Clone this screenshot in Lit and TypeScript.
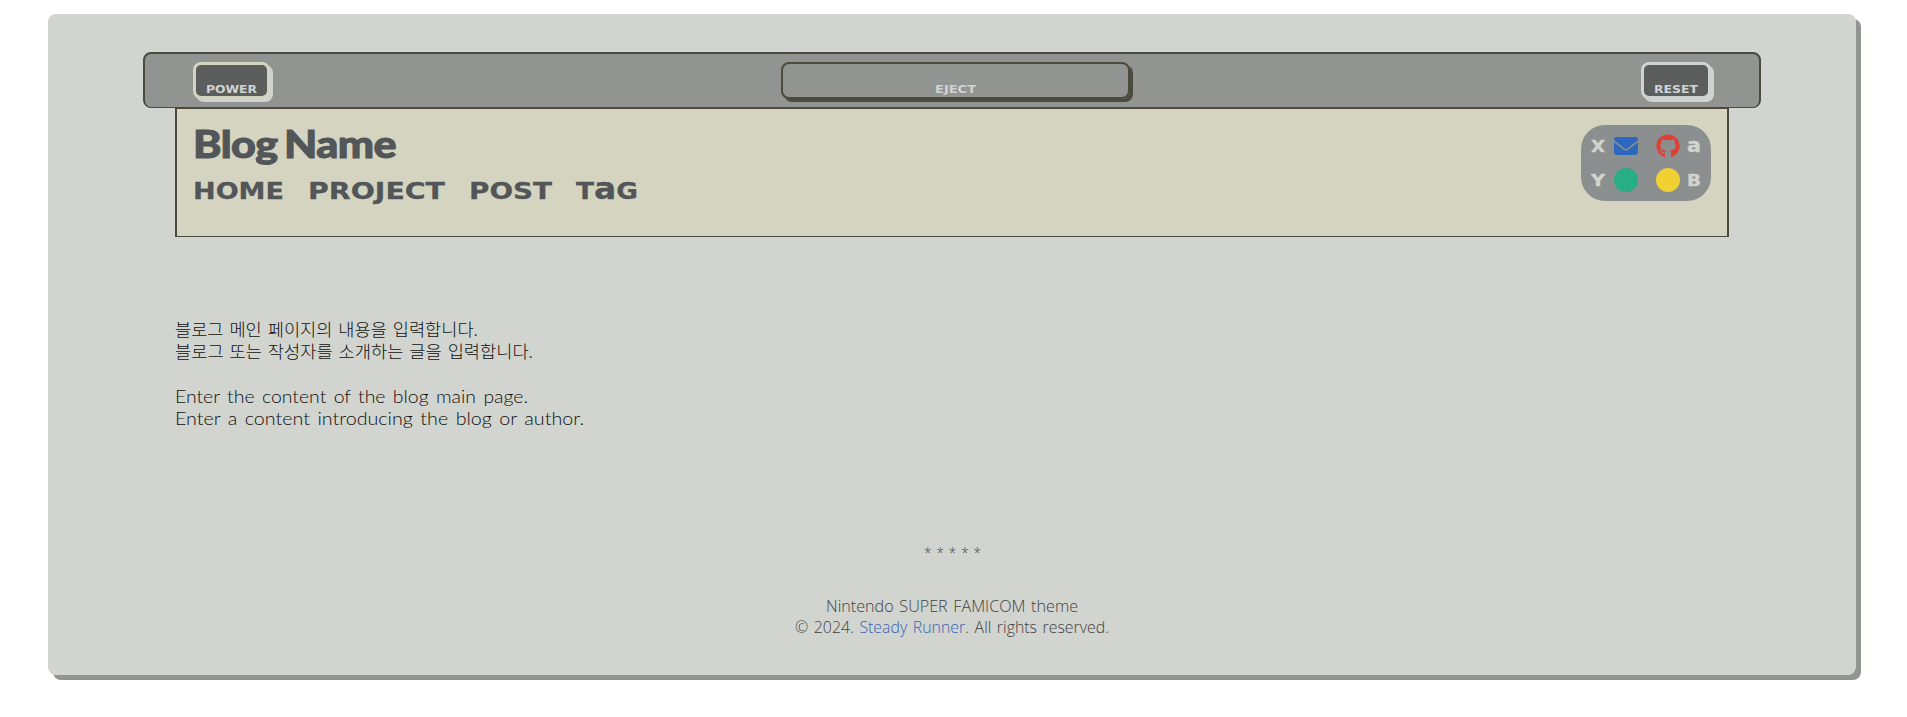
import { LitElement, html, css } from "lit";
import { customElement, property } from "lit/decorators.js";

// One line of text stretched horizontally to a given width.
@customElement("fit-text")
class FitText extends LitElement {
  @property({ type: Number }) w = 100;

  static styles = css`
    :host { display: block; white-space: nowrap; flex: none; }
    .line { display: inline-block; transform-origin: 0 50%; white-space: pre; }
  `;

  firstUpdated() {
    const line = this.renderRoot.querySelector(".line") as HTMLElement;
    this.style.width = `${this.w}px`;
    const natural = line.getBoundingClientRect().width;
    if (natural) line.style.transform = `scaleX(${this.w / natural})`;
  }

  render() {
    return html`<span class="line"><slot></slot></span>`;
  }
}

@customElement("app-root")
class AppRoot extends LitElement {
  static styles = css`
    :host { display: block; height: 717px; background: #fff; overflow: hidden; }
    * { box-sizing: border-box; }
    .page {
      width: 1808px; height: 661px; margin: 14px 0 0 48px; padding: 38px 95px 0;
      background: #d2d4cf; border-radius: 8px; box-shadow: 5px 5px 0 #929492;
      display: flex; flex-direction: column; align-items: center;
    }
    .bar {
      width: 1618px; height: 56px; padding: 8px 48px 0; flex: none;
      background: #929492; border: 2px solid #4c4a3f; border-bottom-width: 1px; border-radius: 8px;
      display: flex; justify-content: space-between; align-items: flex-start;
    }
    .key {
      height: 37px; border-radius: 8px; display: flex; justify-content: center; align-items: flex-end;
      font: bold 10px/12px "DejaVu Sans", sans-serif; color: #d0d3d4;
    }
    .power { width: 77px; background: #5c5e5d; border: 3px solid #d5d4c0; box-shadow: 3px 3px 0 #d0d3d4; }
    .eject { width: 349px; border: 2px solid #4c4a3f; box-shadow: 3px 3px 0 #4c4a3f; padding-bottom: 1px; }
    .reset { width: 70px; background: #5c5e5d; border: 3px solid #d0d3d4; box-shadow: 3px 3px 0 #d0d3d4; }
    header {
      width: 1554px; height: 130px; margin-top: -1px; padding: 16px; flex: none;
      background: #d5d4c0; border: 2px solid #4c4a3f; border-bottom-width: 1px;
      display: flex; justify-content: space-between; align-items: flex-start; color: #525658;
    }
    .title { font: 900 38.5px/40px Lato, sans-serif; margin-top: -2px; word-spacing: -3px; letter-spacing: -0.5px; -webkit-text-stroke: 1px #525658; }
    nav { display: flex; gap: 24px; margin-top: 14px; font: bold 23.5px/28px "DejaVu Sans", sans-serif; -webkit-text-stroke: 0.3px #525658; }
    .tall { font-size: 1.25em; line-height: 0; }
    .pad {
      width: 130px; height: 76px; border-radius: 24px; background: #8c8f8f; padding: 9px 10px 9px;
      display: grid; grid-template-columns: 23px 24px 18px 24px 1fr; grid-template-rows: 24px 24px; row-gap: 10px;
      align-items: center; color: #d2d4cf; font: bold 16px/24px "DejaVu Sans", sans-serif;
    }
    .pad fit-text { height: 24px; padding-top: 1px; -webkit-text-stroke: 0.4px #d2d4cf; }
    .pad svg { display: block; width: 24px; height: 24px; }
    .c4 { grid-column: 4; }
    .last { grid-column: 5; justify-self: end; }
    main { width: 1554px; height: 195px; margin-top: 83px; flex: none; color: #101010; font: 300 18.5px/22px Lato, sans-serif; word-spacing: 2px; }
    .ko { font-family: "Noto Sans CJK KR", sans-serif; font-size: 17px; font-weight: 300; height: 22px; margin-top: -2px; margin-bottom: 2px; }
    .ko + .en { margin-top: 23px; }
    .en { height: 22px; }
    footer {
      display: flex; flex-direction: column; align-items: center; margin-top: 30px;
      font: 300 16.6px/21.6px "Open Sans", sans-serif; color: #3f4342; word-spacing: 1.5px;
    }
    .stars { margin-bottom: 37.5px; height: 12px; font-size: 14px; line-height: 16px; }
    a { color: #3765b4; text-decoration: none; }
  `;

  render() {
    return html`
      <div class="page">
        <div class="bar">
          <div class="key power"><fit-text w="51">POWER</fit-text></div>
          <div class="key eject"><fit-text w="41">EJECT</fit-text></div>
          <div class="key reset"><fit-text w="44">RESET</fit-text></div>
        </div>
        <header>
          <div>
            <fit-text class="title" w="203">Blog Name</fit-text>
            <nav>
              <fit-text w="91">HOME</fit-text>
              <fit-text w="137">PROJECT</fit-text>
              <fit-text w="83">POST</fit-text>
              <fit-text w="62">T<span class="tall">a</span>G</fit-text>
            </nav>
          </div>
          <div class="pad">
            <fit-text w="14">X</fit-text>
            <svg viewBox="0 0 512 512"><path fill="#2c68bd" d="M48 64C21.500 64 0 85.500 0 112c0 15.100 7.100 29.300 19.200 38.400L236.800 313.600c11.400 8.500 27 8.500 38.400 0L492.800 150.400c12.100-9.100 19.200-23.300 19.200-38.400c0-26.500-21.500-48-48-48H48zM0 176V384c0 35.300 28.700 64 64 64H448c35.300 0 64-28.700 64-64V176L294.400 339.200c-22.800 17.100-54 17.100-76.800 0L0 176z"/></svg>
            <svg class="c4" viewBox="0 0 496 512"><path fill="#df4036" d="M165.900 397.400c0 2-2.300 3.600-5.200 3.600-3.300.3-5.600-1.300-5.600-3.600 0-2 2.300-3.600 5.200-3.600 3-.3 5.600 1.300 5.600 3.600zm-31.100-4.500c-.7 2 1.300 4.300 4.300 4.900 2.600 1 5.600 0 6.200-2s-1.300-4.300-4.300-5.200c-2.600-.7-5.500.3-6.200 2.300zm44.200-1.700c-2.900.7-4.900 2.600-4.600 4.900.3 2 2.900 3.300 5.900 2.600 2.900-.7 4.900-2.600 4.600-4.600-.3-1.900-3-3.200-5.900-2.900zM244.800 8C106.100 8 0 113.300 0 252c0 110.900 69.800 205.800 169.500 239.200 12.800 2.300 17.300-5.600 17.300-12.100 0-6.200-.3-40.400-.3-61.400 0 0-70 15-84.700-29.800 0 0-11.400-29.100-27.800-36.600 0 0-22.900-15.700 1.600-15.400 0 0 24.900 2 38.600 25.800 21.900 38.600 58.600 27.500 72.900 20.900 2.300-16 8.800-27.100 16-33.700-55.900-6.200-112.300-14.300-112.300-110.500 0-27.500 7.600-41.300 23.600-58.900-2.600-6.500-11.100-33.300 2.600-67.900 20.900-6.500 69 27 69 27 20-5.600 41.500-8.500 62.800-8.500s42.800 2.900 62.800 8.500c0 0 48.100-33.600 69-27 13.700 34.700 5.200 61.400 2.600 67.900 16 17.700 25.800 31.500 25.800 58.900 0 96.500-58.900 104.200-114.800 110.500 9.200 7.900 17 22.900 17 46.400 0 33.700-.3 75.400-.3 83.600 0 6.500 4.600 14.400 17.300 12.100C428.200 457.800 496 362.900 496 252 496 113.300 383.500 8 244.800 8zM97.200 352.900c-1.300 1-1 3.300.7 5.200 1.600 1.600 3.900 2.300 5.200 1 1.300-1 1-3.300-.7-5.200-1.600-1.600-3.900-2.300-5.200-1zm-10.800-8.100c-.7 1.300.3 2.900 2.300 3.900 1.600 1 3.600.7 4.300-.7.7-1.300-.3-2.900-2.300-3.900-2-.6-3.600-.3-4.300.7zm32.400 35.600c-1.600 1.300-1 4.300 1.300 6.200 2.300 2.300 5.200 2.600 6.500 1 1.300-1.300.7-4.300-1.300-6.200-2.200-2.300-5.200-2.600-6.500-1zm-11.400-14.700c-1.600 1-1.600 3.600 0 5.900 1.600 2.300 4.300 3.300 5.600 2.300 1.600-1.300 1.600-3.900 0-6.200-1.400-2.300-4-3.300-5.600-2z"/></svg>
            <fit-text class="last" w="14"><span class="tall">a</span></fit-text>
            <fit-text w="14">Y</fit-text>
            <svg viewBox="0 0 24 24"><circle cx="12" cy="12" r="12" fill="#27ae82"/></svg>
            <svg class="c4" viewBox="0 0 24 24"><circle cx="12" cy="12" r="12" fill="#f0d032"/></svg>
            <fit-text class="last" w="14">B</fit-text>
          </div>
        </header>
        <main>
          <fit-text class="ko" w="303">블로그 메인 페이지의 내용을 입력합니다.</fit-text>
          <fit-text class="ko" w="358">블로그 또는 작성자를 소개하는 글을 입력합니다.</fit-text>
          <fit-text class="en" w="353">Enter the content of the blog main page.</fit-text>
          <fit-text class="en" w="409">Enter a content introducing the blog or author.</fit-text>
        </main>
        <footer>
          <fit-text class="stars" w="57">* * * * *</fit-text>
          <fit-text w="252">Nintendo SUPER FAMICOM theme</fit-text>
          <fit-text w="314">© 2024. <a>Steady Runner</a>. All rights reserved.</fit-text>
        </footer>
      </div>
    `;
  }
}
